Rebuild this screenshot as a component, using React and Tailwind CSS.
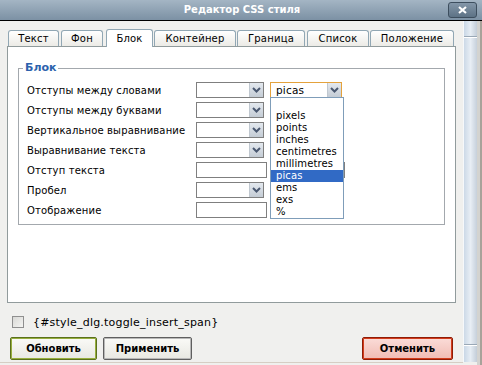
import React from "react";

const Chevron = () => (
  <svg width="9" height="6" viewBox="0 0 9 6">
    <path d="M1 1 L4.5 4.5 L8 1" fill="none" stroke="#4a5870" strokeWidth="2" />
  </svg>
);

const Select = ({ w = "w-[68px]", border = "border-[#7f7f7f]", value, children }) => (
  <div className={`relative ${w} h-[16px] border ${border} bg-white flex items-center`}>
    <span className="flex-1 pl-[5px] leading-[14px] text-[10.5px] tracking-[0.2px]">{value}</span>
    <div className="w-[14px] h-[14px] bg-gradient-to-b from-[#e4e9ef] to-[#c4ccd5] border-l border-[#c0c8d0] flex items-center justify-center">
      <Chevron />
    </div>
    {children}
  </div>
);

const TextInput = () => <div className="w-[71px] h-[16px] border border-[#7f7f7f] bg-white" />;

const Row = ({ label, children }) => (
  <div className="h-[20px] flex items-center">
    <div className="w-[177px] pl-[8px] whitespace-nowrap tracking-[0.15px]">{label}</div>
    <div className="flex items-center gap-[6px]">{children}</div>
  </div>
);

const units = ["", "pixels", "points", "inches", "centimetres", "millimetres", "picas", "ems", "exs", "%"];

const Dropdown = () => (
  <div className="absolute top-full left-[-1px] w-[74px] border border-[#7f9db9] bg-white z-20">
    {units.map((u, i) => (
      <div
        key={i}
        className={`h-[12px] leading-[12px] pl-[5px] text-[10px] tracking-[0.1px] whitespace-nowrap ${u === "picas" ? "bg-[#316ac5] text-white" : ""}`}
      >
        {u}
      </div>
    ))}
  </div>
);

const tabs = [
  { t: "Текст", w: "w-[51px]", ml: "ml-0" },
  { t: "Фон", w: "w-[42px]", ml: "ml-[2px]" },
  { t: "Блок", w: "w-[47px]", ml: "ml-[3px]", active: true },
  { t: "Контейнер", w: "w-[82px]", ml: "ml-[1px]" },
  { t: "Граница", w: "w-[68px]", ml: "ml-[1px]" },
  { t: "Список", w: "w-[62px]", ml: "ml-[2px]" },
  { t: "Положение", w: "w-[84px]", ml: "ml-[1px]" },
];

const Button = ({ label, w, cls }) => (
  <div className={`${w} h-[23px] border rounded-[2px] flex items-center justify-center font-bold text-[10px] ${cls}`}>
    {label}
  </div>
);

export default function App() {
  return (
    <div className="w-[482px] h-[365px] overflow-hidden bg-[#f0f0ee] flex flex-col text-[10px] text-black font-['DejaVu_Sans',sans-serif]">
      {/* Title bar */}
      <div className="relative h-[21px] border-b border-black bg-gradient-to-b from-[#a4b5c4] to-[#7c91a4] flex items-center justify-center">
        <span className="text-white font-bold text-[10px] leading-none pl-[2px]">Редактор CSS стиля</span>
        <div className="absolute right-[5px] top-[2px] w-[29px] h-[16px] rounded-[3px] border border-[#3d4e5e] bg-gradient-to-b from-[#8497a9] to-[#5d7285] flex items-center justify-center">
          <svg width="9" height="8" viewBox="0 0 9 8">
            <path d="M1 1 L8 7 M8 1 L1 7" stroke="white" strokeWidth="2.2" />
          </svg>
        </div>
      </div>

      <div className="flex flex-1 min-h-0">
        {/* Main */}
        <div className="w-[463px] flex flex-col">
          <div className="pl-[7px] pt-[8px]">
            <div className="flex items-end h-[17px] pl-[1px]">
              {tabs.map((tb) => (
                <div
                  key={tb.t}
                  className={`${tb.w} ${tb.ml} border border-b-0 border-[#91a7b4] rounded-t-[3px] flex items-center justify-center tracking-[0.2px] ${
                    tb.active
                      ? "h-[18px] mb-[-1px] bg-white relative z-10 pb-[1px]"
                      : "h-[16px] bg-gradient-to-b from-white to-[#ecebe6]"
                  }`}
                >
                  {tb.t}
                </div>
              ))}
            </div>
            <div className="w-[449px] h-[257px] border border-[#919b9c] bg-white pl-[10px] pr-[10px]">
              <fieldset className="mt-[14px] border border-[#a3a8ad] pb-[4px]">
                <legend className="ml-[4px] px-[2px] font-bold text-[11px] leading-[14px] text-[#2c62ad]">Блок</legend>
                <div className="mt-[5px]">
                  <Row label="Отступы между словами">
                    <Select />
                    <Select w="w-[72px]" border="border-[#e4a23c]" value="picas">
                      <Dropdown />
                    </Select>
                  </Row>
                  <Row label="Отступы между буквами">
                    <Select />
                    <Select w="w-[72px]" value="" />
                  </Row>
                  <Row label="Вертикальное выравнивание">
                    <Select />
                  </Row>
                  <Row label="Выравнивание текста">
                    <Select />
                  </Row>
                  <Row label="Отступ текста">
                    <TextInput />
                    <Select w="w-[72px]" value="" />
                  </Row>
                  <Row label="Пробел">
                    <Select />
                  </Row>
                  <Row label="Отображение">
                    <TextInput />
                  </Row>
                </div>
              </fieldset>
            </div>
          </div>

          {/* Checkbox row */}
          <div className="flex items-center mt-[13px] pl-[12px] h-[12px]">
            <div className="w-[12px] h-[12px] border border-[#8f8f8f] bg-gradient-to-br from-[#d9d9d6] to-[#f4f4f2]" />
            <span className="ml-[9px] text-[11px] leading-none tracking-[0.2px]">{"{#style_dlg.toggle_insert_span}"}</span>
          </div>

          {/* Buttons */}
          <div className="flex items-center mt-[9px] pl-[10px] pr-[10px]">
            <Button
              label="Обновить"
              w="w-[87px]"
              cls="border-[#5a701c] bg-gradient-to-b from-[#fafaf7] to-[#e8e8e2] shadow-[inset_0_0_0_1px_#97ae3e]"
            />
            <div className="ml-[6px]">
              <Button
                label="Применить"
                w="w-[89px]"
                cls="border-[#5f5f5f] bg-gradient-to-b from-[#fafaf7] to-[#e8e8e2] shadow-[inset_0_0_0_1px_#b8b8b8]"
              />
            </div>
            <div className="ml-auto">
              <Button
                label="Отменить"
                w="w-[91px]"
                cls="border-[#8f1c06] bg-gradient-to-b from-[#fbdcd8] to-[#f0bcb4] shadow-[inset_0_0_0_1px_#d23c1c]"
              />
            </div>
          </div>
          <div className="mt-auto mb-[2px] h-[1px] bg-[#d6cec4]" />
        </div>

        {/* Scrollbar */}
        <div className="w-[14px] flex flex-col mb-[3px] border-l border-[#f6f8fa]">
          <div className="h-[16px] bg-gradient-to-r from-[#c9d7e6] via-[#e6edf4] to-[#c3cdd8] border-b border-[#9aa8b6]" />
          <div className="flex-1 bg-gradient-to-r from-[#ccd9e7] via-[#e8eef5] to-[#c6d0db] border-t border-white border-b border-b-[#9aa8b6]" />
          <div className="h-[17px] bg-gradient-to-r from-[#c9d7e6] via-[#e6edf4] to-[#c3cdd8] border-t border-white" />
        </div>
        <div className="w-[3px] bg-[#d3d3d0]" />
        <div className="w-[2px] bg-[#a8a29a]" />
      </div>
    </div>
  );
}
